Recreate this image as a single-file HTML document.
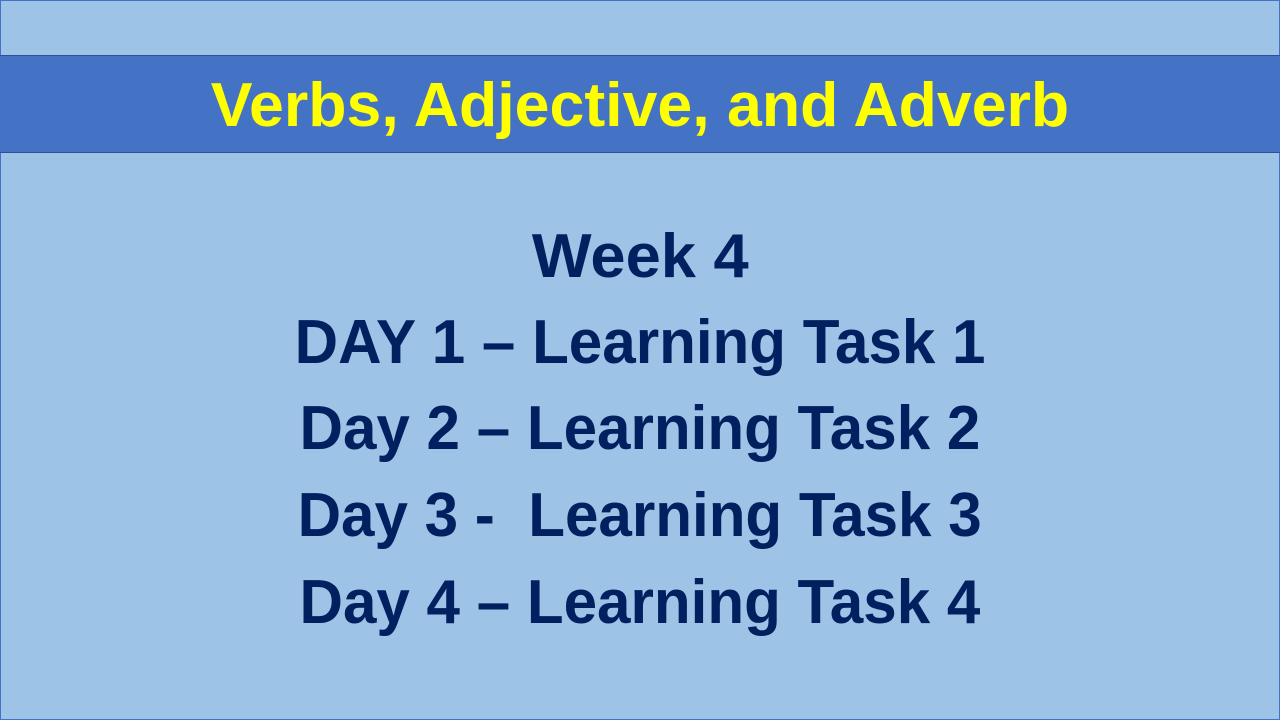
<!DOCTYPE html>
<html><head><meta charset="utf-8"><style>
html,body{margin:0;padding:0;}
body{width:1280px;height:720px;background:#9DC3E6;position:relative;overflow:hidden;font-family:"Liberation Sans",sans-serif;font-weight:bold;}
.frame{position:absolute;left:0;top:0;width:1278px;height:718px;border:1px solid #4472C4;}
.banner{position:absolute;left:0;top:55px;width:1280px;height:96px;background:#4472C4;border-top:1px solid #2F528F;border-bottom:1px solid #2F528F;}
.l{position:absolute;left:0;width:1280px;text-align:center;font-size:62px;line-height:62px;white-space:nowrap;}
.l span{display:inline-block;transform:scaleX(0.97);transform-origin:center;}
.t{color:#FFFF00;}
.b{color:#002060;}
</style></head><body>
<div class="frame"></div>
<div class="banner"></div>
<div class="l t" style="top:75px"><span style="transform:scaleX(1.01)">Verbs, Adjective, and Adverb</span></div>
<div class="l b" style="top:226px"><span style="transform:scaleX(1.02)">Week 4</span></div>
<div class="l b" style="top:312px"><span>DAY 1 – Learning Task 1</span></div>
<div class="l b" style="top:398px"><span>Day 2 – Learning Task 2</span></div>
<div class="l b" style="top:485px"><span>Day 3 -&nbsp; Learning Task 3</span></div>
<div class="l b" style="top:572px"><span>Day 4 – Learning Task 4</span></div>
</body></html>
